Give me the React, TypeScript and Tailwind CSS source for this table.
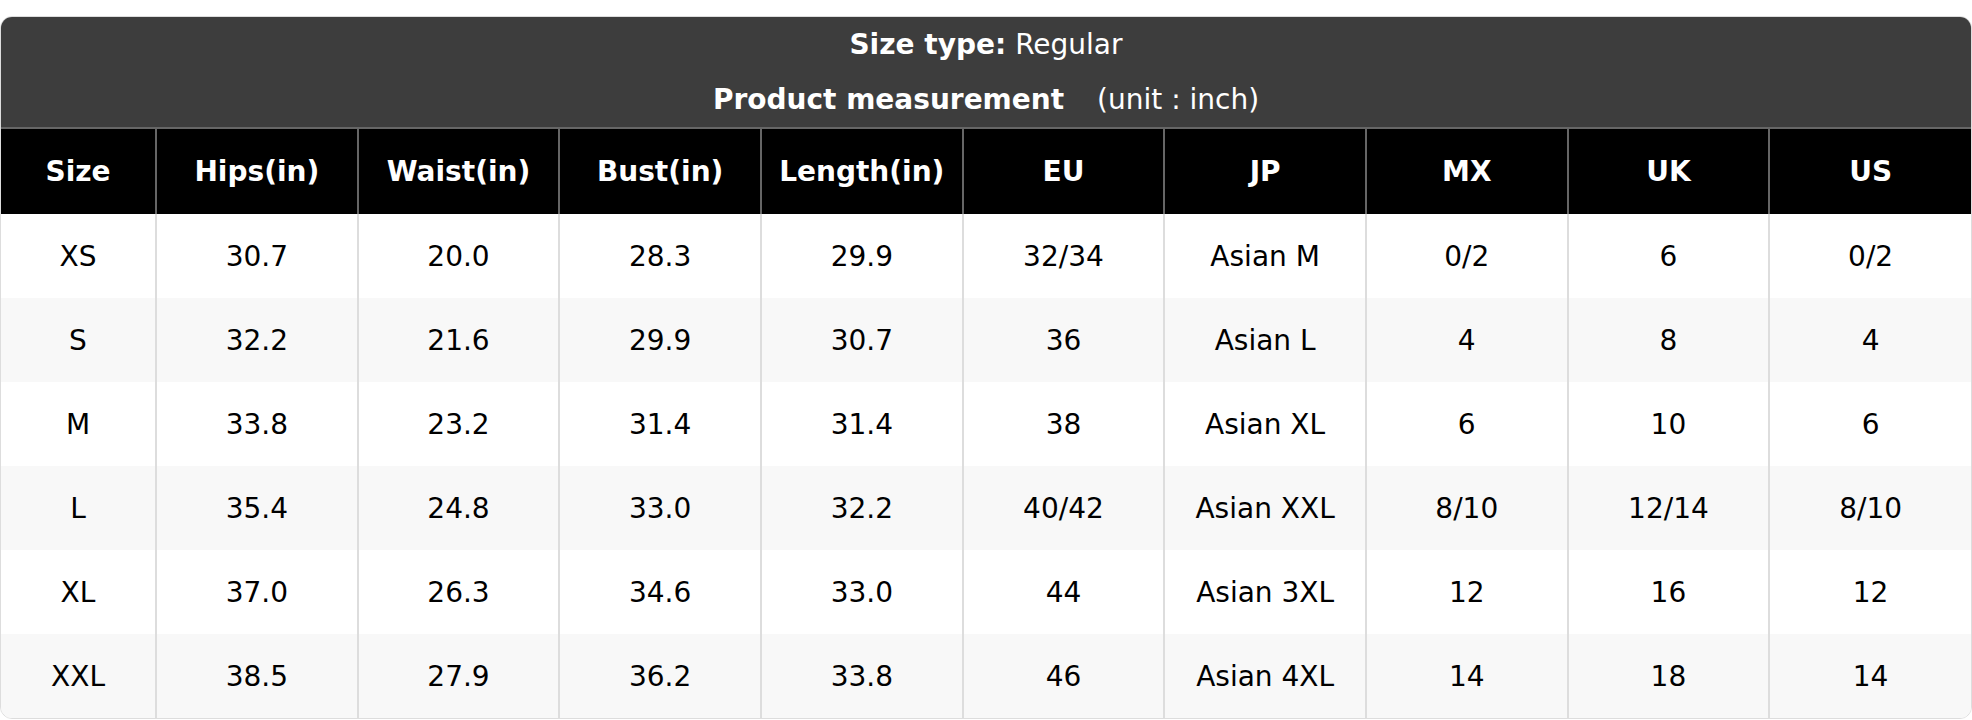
const columns = ['Size', 'Hips(in)', 'Waist(in)', 'Bust(in)', 'Length(in)', 'EU', 'JP', 'MX', 'UK', 'US'];

const rows: string[][] = [
  ['XS', '30.7', '20.0', '28.3', '29.9', '32/34', 'Asian M', '0/2', '6', '0/2'],
  ['S', '32.2', '21.6', '29.9', '30.7', '36', 'Asian L', '4', '8', '4'],
  ['M', '33.8', '23.2', '31.4', '31.4', '38', 'Asian XL', '6', '10', '6'],
  ['L', '35.4', '24.8', '33.0', '32.2', '40/42', 'Asian XXL', '8/10', '12/14', '8/10'],
  ['XL', '37.0', '26.3', '34.6', '33.0', '44', 'Asian 3XL', '12', '16', '12'],
  ['XXL', '38.5', '27.9', '36.2', '33.8', '46', 'Asian 4XL', '14', '18', '14'],
];

export default function App() {
  return (
    <div className="bg-white pt-4 font-['DejaVu_Sans',sans-serif] text-[28px]">
      <div className="w-full overflow-hidden rounded-[12px] border border-[#dddddd]">
        {/* Title block */}
        <div className="border-b-2 border-[#666666] bg-[#3d3d3d] text-white">
          <div className="flex h-[55px] items-center justify-center">
            <span className="font-bold">Size type:</span>
            <span className="ml-[9px]">Regular</span>
          </div>
          <div className="flex h-[55px] items-center justify-center gap-[33px]">
            <span className="font-bold">Product measurement</span>
            <span>(unit : inch)</span>
          </div>
        </div>

        {/* Size chart */}
        <table className="w-full table-fixed border-collapse text-center">
          <colgroup>
            <col className="w-[155px]" />
            {columns.slice(1).map((c) => (
              <col key={c} />
            ))}
          </colgroup>
          <thead>
            <tr className="h-[85px] bg-black text-white">
              {columns.map((c, i) => (
                <th
                  key={c}
                  className={`pt-px font-bold ${i > 0 ? 'border-l-2 border-[#666666]' : ''}`}
                >
                  {c}
                </th>
              ))}
            </tr>
          </thead>
          <tbody className="text-black">
            {rows.map((row, r) => (
              <tr key={row[0]} className={`h-[84px] ${r % 2 === 1 ? 'bg-[#f8f8f8]' : 'bg-white'}`}>
                {row.map((cell, i) => (
                  <td
                    key={i}
                    className={`pt-px ${i > 0 ? 'border-l-2 border-[#dddddd]' : ''}`}
                  >
                    {cell}
                  </td>
                ))}
              </tr>
            ))}
          </tbody>
        </table>
      </div>
    </div>
  );
}
